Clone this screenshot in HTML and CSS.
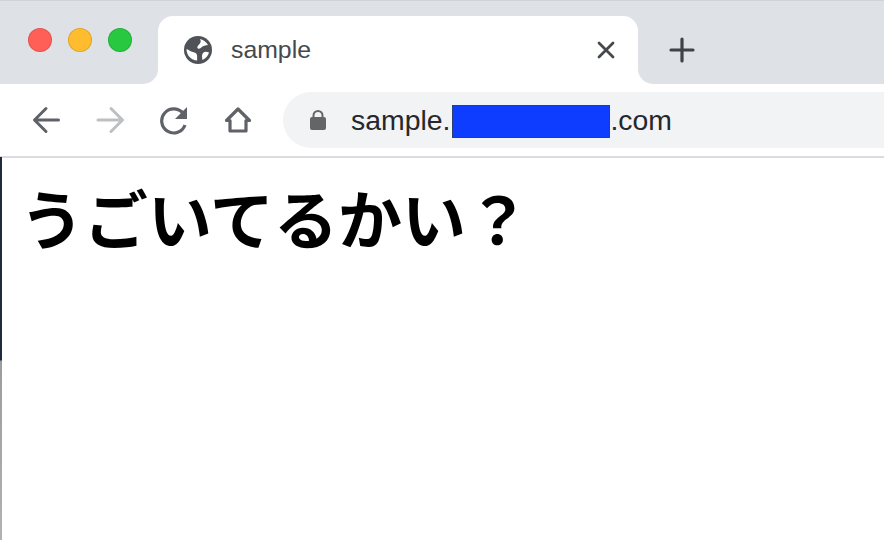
FILE: index.html
```html
<!DOCTYPE html>
<html lang="ja">
<head>
  <title>sample</title>
  <link rel="stylesheet" href="styles.css">
</head>
<body>

<div class="window">
  <div class="tab-strip">
    <div class="lights">
      <span class="light red"></span>
      <span class="light yellow"></span>
      <span class="light green"></span>
    </div>
    <div class="tab">
      <svg class="globe" width="30" height="30" viewBox="0 0 30 30">
        <circle cx="15" cy="15" r="14" fill="#4f5256"/>
        <path d="M17 4c3 .5 6 2.500 8 6-2 .5-4 .5-5.500 1.500-1.500 1-3 3-4.500 2-1.500-1 0-3 1.500-4.500 1.500-1.500 1.500-3.500.5-5z" fill="#fff"/>
        <path d="M3.500 14c2.500 1 4 2.500 6.500 3 2 .5 3.500 1 4 3 .3 1.500 0 3.500.2 5.500-6-.3-10.700-5-10.700-11.500z" fill="#fff"/>
        <path d="M20 18c1.500-1.500 3.500-1.500 6-.5-.8 3-3 6-6.500 7.500-.5-2.500-1-5 .5-7z" fill="#fff"/>
      </svg>
      <span class="tab-title">sample</span>
      <svg class="tab-close" width="18" height="18" viewBox="0 0 18 18">
        <path d="M2 2l14 14M16 2L2 16" stroke="#45484c" stroke-width="2.800" stroke-linecap="round"/>
      </svg>
    </div>
    <div class="strip-rest">
      <svg class="new-tab" width="26" height="26" viewBox="0 0 26 26">
        <path d="M13 2v22M2 13h22" stroke="#3f4246" stroke-width="3.200" stroke-linecap="round"/>
      </svg>
    </div>
  </div>

  <div class="toolbar">
    <div class="nav-icons">
      <svg width="30" height="30" viewBox="0 0 30 30">
        <path d="M27.500 15H4M15 3.500L3.500 15 15 26.500" fill="none" stroke="#5f6368" stroke-width="3" stroke-linecap="round" stroke-linejoin="round"/>
      </svg>
      <svg width="30" height="30" viewBox="0 0 30 30">
        <path d="M3 15h24M16 3.500L27.500 15 16 26.500" fill="none" stroke="#bdbfc1" stroke-width="3" stroke-linecap="round" stroke-linejoin="round"/>
      </svg>
      <svg width="30" height="30" viewBox="0 0 30 30">
        <path d="M26 20a12 12 0 1 1-1.500-11" fill="none" stroke="#5f6368" stroke-width="3.200"/>
        <path d="M28 2v12H16z" fill="#5f6368"/>
      </svg>
      <svg width="30" height="30" viewBox="0 0 30 30">
        <path d="M3.500 15.500L15 4l11.500 11.500h-3.500v10.500H7V15.500z" fill="none" stroke="#5f6368" stroke-width="3.200" stroke-linejoin="round"/>
      </svg>
    </div>
    <div class="omnibox">
      <svg class="lock" width="18" height="22" viewBox="0 0 18 22">
        <path d="M4.500 9V6.500a4.500 4.500 0 0 1 9 0V9" fill="none" stroke="#636569" stroke-width="2"/>
        <rect x="1" y="8" width="16" height="13" rx="2" fill="#636569"/>
      </svg>
      <span class="url">sample.<span class="redacted"></span>.com</span>
    </div>
  </div>

  <div class="page">
    <h1>うごいてるかい？</h1>
  </div>

  <div class="edge"></div>
</div>

</body>
</html>
```

FILE: styles.css
```css
* { box-sizing: border-box; }
html, body { margin: 0; height: 100%; overflow: hidden; }
body { background: #fff; font-family: "Liberation Sans", "Noto Sans CJK JP", sans-serif; }

.window { position: relative; display: flex; flex-direction: column; width: 884px; height: 540px; }
.edge { position: absolute; left: 0; top: 157px; width: 2px; height: 383px; background: linear-gradient(#1f2b3a 0, #1f2b3a 203px, #9a9c9f 204px, #b2b2b2 100%); }

.tab-strip { display: flex; height: 84px; flex-shrink: 0; background: linear-gradient(#dee1e6 50%, #fff 50%); border-top: 1px solid #d0d2d6; }
.lights { display: flex; gap: 16px; width: 158px; padding: 27px 0 0 28px; background: #dee1e6; border-bottom-right-radius: 15px; }
.light { width: 24px; height: 24px; border-radius: 50%; border: 1px solid rgba(0, 0, 0, 0.12); }
.red { background: #ff5f57; }
.yellow { background: #febc2e; }
.green { background: #28c840; }

.tab { display: flex; align-items: center; width: 480px; margin-top: 15px; padding: 0 23px 0 25px; background: #fff; border-radius: 15px 15px 0 0; }
.globe { flex-shrink: 0; }
.tab-title { flex: 1; margin-left: 18px; margin-top: -1px; font-size: 24.800px; color: #45484c; }
.tab-close { flex-shrink: 0; margin-top: -1px; }
.strip-rest { flex: 1; padding: 36px 0 0 31px; background: #dee1e6; border-bottom-left-radius: 15px; }
.new-tab { display: block; }

.toolbar { display: flex; align-items: center; height: 74px; flex-shrink: 0; padding: 0 0 0 31px; background: #fff; border-bottom: 2px solid #dcdce0; }
.nav-icons { display: flex; gap: 34px; }
.omnibox { display: flex; align-items: center; flex: 1; height: 56px; margin-left: 30px; padding-left: 26px; background: #f1f3f4; border-radius: 28px 0 0 28px; }
.lock { flex-shrink: 0; }
.url { display: flex; align-items: center; margin-left: 24px; font-size: 28.400px; color: #25282b; }
.redacted { display: inline-block; width: 158px; height: 33px; margin: 2px 0 0 2px; background: #0e3dff; border: 1px solid #2d3f73; }

.page { flex: 1; padding: 25px 0 0 20px; }
h1 { margin: 0; font-size: 64px; line-height: 78px; font-weight: 700; color: #000; }
```
